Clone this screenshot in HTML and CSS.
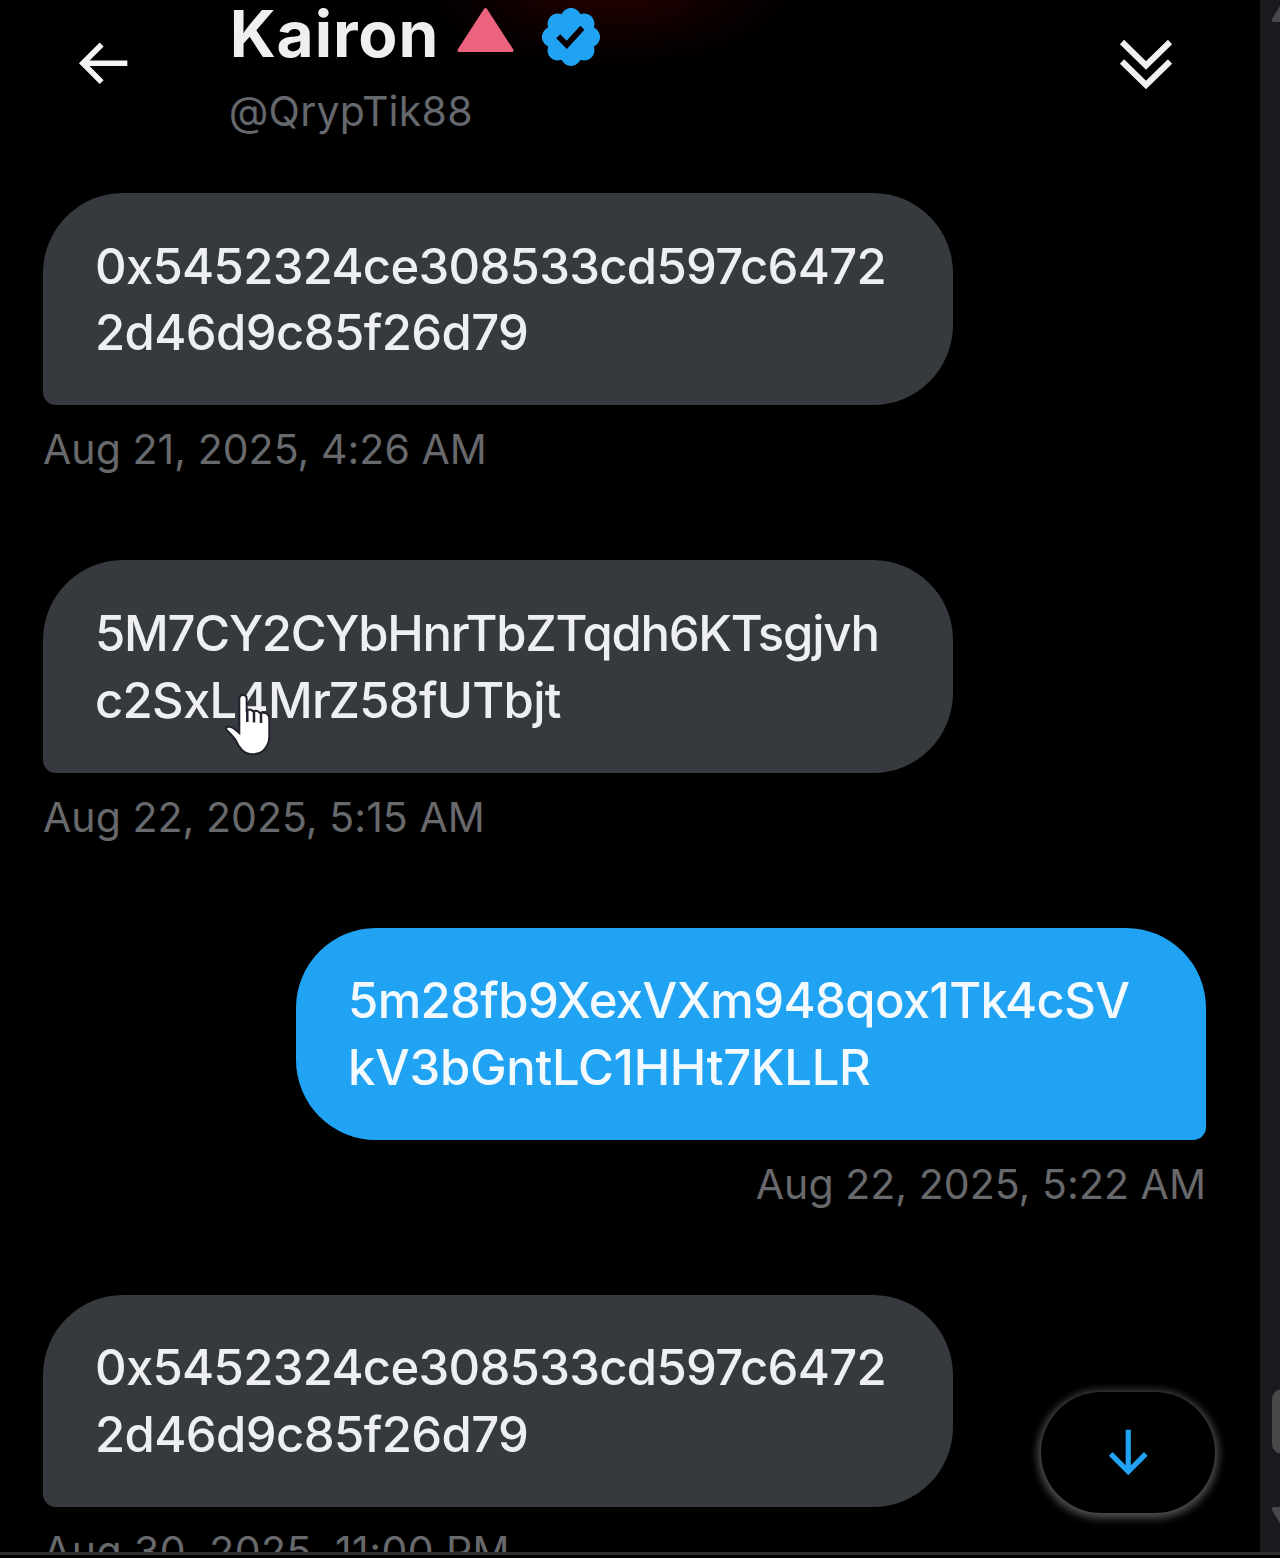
FILE: index.html
```
<!DOCTYPE html>
<html lang="en">
<head>
  <meta charset="UTF-8"/>
  <title>Kairon (@QrypTik88)</title>
  <link rel="stylesheet" href="styles.css">
</head>
<body>
  <div id="app">
    <main class="chat">
      <header class="header">
        <svg class="back" viewBox="0 0 24 24"><path d="M7.414 13l5.043 5.04-1.414 1.42L3.586 12l7.457-7.46 1.414 1.42L7.414 11H21v2H7.414z"/></svg>
        <div class="user">
          <div class="name-row">
            <span class="name">Kairon</span>
            <svg class="triangle" viewBox="0 0 57 44"><path d="M26.8 1.2Q28.5-1 30.2 1.2L56.3 41.5Q57.3 44 55 44H2Q-.3 44 .7 41.5z"/></svg>
            <svg class="verified" viewBox="0 0 24 24"><path d="M22.25 12c0-1.43-.88-2.67-2.19-3.34.46-1.39.2-2.9-.81-3.91s-2.52-1.27-3.91-.81c-.66-1.31-1.91-2.19-3.34-2.19s-2.67.88-3.33 2.19c-1.4-.46-2.91-.2-3.92.81s-1.26 2.52-.8 3.91c-1.31.67-2.2 1.91-2.2 3.34s.89 2.67 2.2 3.34c-.46 1.39-.21 2.9.8 3.91s2.52 1.26 3.91.81c.67 1.31 1.91 2.19 3.34 2.19s2.68-.88 3.34-2.19c1.39.45 2.9.2 3.91-.81s1.27-2.52.81-3.91c1.31-.67 2.19-1.91 2.19-3.34zm-11.71 4.2L6.8 12.46l1.41-1.42 2.26 2.26 4.8-5.23 1.47 1.36-6.2 6.77z"/></svg>
          </div>
          <div class="handle">@QrypTik88</div>
        </div>
        <svg class="collapse" viewBox="0 0 54 50"><path d="M3 3l24 23.5L51 3M3 22.5L27 46l24-23.5"/></svg>
      </header>

      <section class="messages">
        <div class="msg">
          <div class="bubble">
            <div class="hex-a">0x5452324ce308533cd597c6472</div>
            <div class="hex-b">2d46d9c85f26d79</div>
          </div>
          <time>Aug 21, 2025, 4:26 AM</time>
        </div>
        <div class="msg">
          <div class="bubble">
            <div class="sol-a">5M7CY2CYbHnrTbZTqdh6KTsgjvh</div>
            <div class="sol-b">c2SxL4MrZ58fUTbjt</div>
          </div>
          <time>Aug 22, 2025, 5:15 AM</time>
        </div>
        <div class="msg sent">
          <div class="bubble">
            <div class="own-a">5m28fb9XexVXm948qox1Tk4cSV</div>
            <div class="own-b">kV3bGntLC1HHt7KLLR</div>
          </div>
          <time>Aug 22, 2025, 5:22 AM</time>
        </div>
        <div class="msg">
          <div class="bubble">
            <div class="hex-a">0x5452324ce308533cd597c6472</div>
            <div class="hex-b">2d46d9c85f26d79</div>
          </div>
          <time class="wide">Aug 30, 2025, 11:00 PM</time>
        </div>
      </section>

      <button class="to-bottom" aria-label="Scroll to bottom">
        <svg viewBox="0 0 24 24"><path d="M13 3v13.59l5.043-5.05 1.414 1.42L12 20.41l-7.457-7.45 1.414-1.42L11 16.59V3h2z"/></svg>
      </button>
    </main>

    <aside class="scrollbar">
      <svg class="up" viewBox="0 0 20 18"><path d="M10 0L19 15Q20 18 17 18H3Q0 18 1 15z"/></svg>
      <div class="thumb"></div>
      <svg class="down" viewBox="0 0 20 18"><path d="M10 18L19 3Q20 0 17 0H3Q0 0 1 3z"/></svg>
    </aside>
  </div>

  <svg class="cursor" viewBox="0 0 48 66">
    <path class="hand" d="M15.3 7Q15.3 3 19 3T22.7 7V18.5Q26 16 29.3 19.5Q33 17.5 36 21Q45.3 19 45.3 28V45Q45 53 39 59Q35 62.3 29 62.3Q22 62.3 18 58Q14 54 11 47L7 42.5L2.5 38Q1 35 5 34.5Q9 35 15.3 41z"/>
    <path class="fingers" d="M23.3 18v12M30 20v10.5M37 22v9"/>
  </svg>
</body>
</html>
```
FILE: styles.css
```
* { margin:0; padding:0; box-sizing:border-box }
body {
  height:1558px; overflow:hidden; background:#000;
  font-family:Inter,"Liberation Sans",sans-serif; color:#eeeff0;
}
#app {
  display:flex; height:1555px; overflow:hidden;
  border-bottom:3px solid #303033;
}

/* Conversation */
.chat {
  position:relative; flex:1; height:1552px; overflow:hidden;
  background:radial-gradient(ellipse 200px 85px at 610px -14px, #280000, #0a0000 65%, #000);
}
.header {
  display:flex; align-items:flex-start;
  height:193px; padding:0 86px 0 70px;
}
.back { width:66.7px; height:66.7px; margin:30px 0 0 -1px; fill:#f4f4f4 }
.user { flex:1; margin-left:92px }
.name-row { display:flex; height:67px }
.name {
  width:229px; padding-left:2px; font-size:64px; line-height:67px;
  font-weight:750; letter-spacing:.9px;
}
.triangle { width:57px; height:44px; margin-top:8px; fill:#ec637d }
.verified { width:68px; height:68px; margin:2.5px 0 0 23px; fill:#21a3f3 }
.handle {
  margin-top:18px; padding-left:1px; color:#65686c;
  font-size:41px; line-height:53.3px; letter-spacing:.25px;
}
.collapse {
  width:54px; height:50px; margin:39px 1px 0 0;
  fill:none; stroke:#f0f0f0; stroke-width:6;
}

/* Messages */
.messages { display:flex; flex-direction:column; gap:83.7px; padding:0 54px 0 43px }
.msg { display:flex; flex-direction:column; align-items:flex-start }
.bubble {
  width:910px; padding:40.5px 52px 38.5px;
  background:#363a3e; border-radius:80px 80px 80px 13px;
  font-size:49px; line-height:66.67px; font-weight:450;
  white-space:nowrap;
}
time {
  margin-top:18px; color:#68696c; white-space:nowrap;
  font-size:41px; line-height:53.3px; letter-spacing:.05px;
}
.sent { align-items:flex-end }
.sent .bubble { background:#21a3f3; border-radius:80px 80px 13px 80px; color:#f2faff }
.hex-a { letter-spacing:-.7px }
.hex-b { letter-spacing:-.6px }
.sol-a { letter-spacing:-1.26px }
.sol-b { letter-spacing:-.72px }
.own-a { letter-spacing:-.63px }
.own-b { letter-spacing:-.29px }
.wide { letter-spacing:.44px }

.to-bottom {
  position:absolute; left:1041px; top:1392px;
  display:flex; align-items:center; justify-content:center;
  width:174px; height:121px; padding-top:2px;
  background:#000; border:none; border-radius:61px;
  box-shadow:0 2px 8px 3px rgba(255,255,255,.32);
}
.to-bottom svg { width:62.5px; height:62.5px; fill:#21a3f3 }

/* Scrollbar, cut off by the right edge */
.scrollbar {
  display:flex; flex-direction:column;
  width:20px; height:1552px; padding:4px 0 0 11px;
  background:#191a1e; overflow:hidden;
}
.scrollbar svg { flex:none; width:20px; height:18px; fill:#48484b }
.thumb {
  flex:none; width:20px; height:65px; margin:1367px 0 53px 1px;
  background:#48484b; border-radius:10px;
}

/* Pointer over the second message */
.cursor { position:absolute; left:224px; top:692px; width:48px; height:66px }
.hand { fill:#fff; stroke:#20212c; stroke-width:2 }
.fingers { fill:none; stroke:#20212c; stroke-width:2.5 }
```
